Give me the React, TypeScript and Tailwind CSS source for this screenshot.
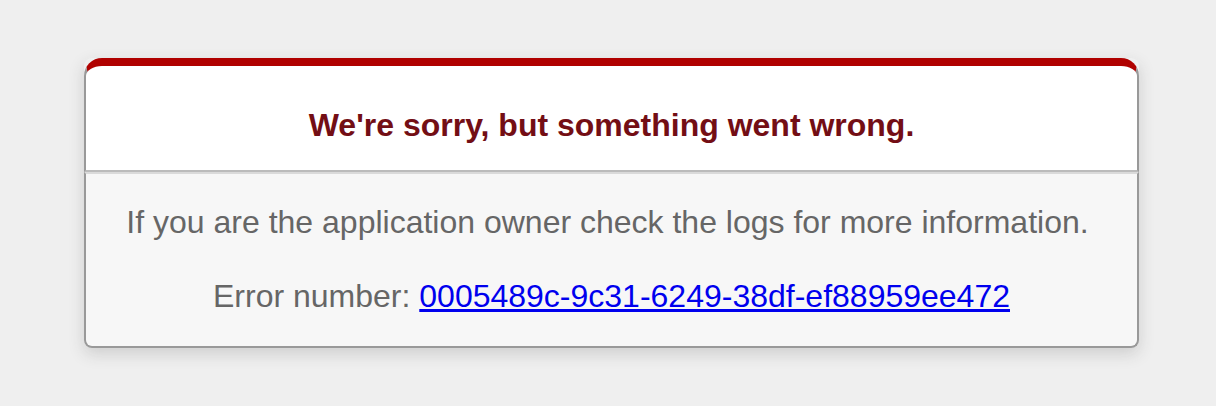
import React from 'react';

const errorId = '0005489c-9c31-6249-38df-ef88959ee472';

export default function App() {
  return (
    <div
      className="min-h-screen bg-[#efefef] pt-[58px] text-center"
      style={{ fontFamily: '"Liberation Sans", Arial, sans-serif' }}
    >
      <div className="ml-[84px] w-[1055px] rounded-[8px] shadow-[0_6px_16px_rgba(50,50,50,0.17)]">
        {/* header */}
        <div className="rounded-t-[18px] border-x-2 border-t-8 border-b-2 border-x-[#999] border-t-[#b00100] border-b-[#bbb] bg-white px-[12%] pt-[14px]">
          <h1 className="my-[21px] text-[32px] font-bold leading-[48px] text-[#730e15]">
            We're sorry, but something went wrong.
          </h1>
        </div>

        {/* details */}
        <div className="rounded-b-[8px] border-x-2 border-t-2 border-b-2 border-x-[#999] border-t-[#dadada] border-b-[#999] bg-[#f7f7f7] px-8 pt-[30px] pb-[31px] text-[32px] leading-[37px] text-[#666]">
          <p className="mb-[37px] pr-2">If you are the application owner check the logs for more information.</p>
          <p>
            Error number:{' '}
            <a href="#" className="text-[#0000ee] underline">
              {errorId}
            </a>
          </p>
        </div>
      </div>
    </div>
  );
}
